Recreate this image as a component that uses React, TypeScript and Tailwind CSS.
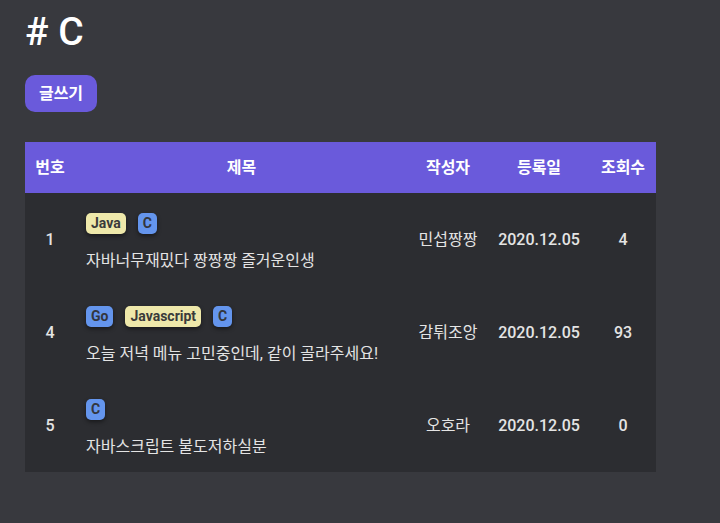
import type { ReactNode } from "react";

type Tag = "Java" | "C" | "Go" | "Javascript";

interface PostRow {
  id: number;
  tags: Tag[];
  title: string;
  author: string;
  date: string;
  views: number;
}

const rows: PostRow[] = [
  { id: 1, tags: ["Java", "C"], title: "자바너무재밌다 짱짱짱 즐거운인생", author: "민섭짱짱", date: "2020.12.05", views: 4 },
  { id: 4, tags: ["Go", "Javascript", "C"], title: "오늘 저녁 메뉴 고민중인데, 같이 골라주세요!", author: "감튀조앙", date: "2020.12.05", views: 93 },
  { id: 5, tags: ["C"], title: "자바스크립트 불도저하실분", author: "오호라", date: "2020.12.05", views: 0 },
];

function TagChip({ name }: { name: Tag }) {
  const yellow = name === "Java" || name === "Javascript";
  return (
    <span
      className={
        yellow
          ? "inline-flex h-[21px] items-center rounded-[5px] bg-[#eee8aa] px-[5px] text-[14px] font-bold text-[#3a3a3a] shadow-[0_2px_4px_rgba(0,0,0,0.45)]"
          : "inline-flex h-[21px] items-center rounded-[5px] bg-[#6495ed] px-[5px] text-[14px] font-bold text-[#33363d] shadow-[0_2px_4px_rgba(0,0,0,0.45)]"
      }
    >
      {name}
    </span>
  );
}

function Th({ children }: { children: ReactNode }) {
  return <th className="h-[51px] p-0 text-center text-[16px] font-bold text-white">{children}</th>;
}

export default function App() {
  return (
    <div
      className="min-h-[523px] bg-[#38393e] px-[25px] pt-[10px]"
      style={{ fontFamily: 'Roboto, "Noto Sans CJK KR", sans-serif' }}
    >
      <h1 className="text-[39px] font-medium leading-[44px] text-white"># C</h1>

      <button className="mt-[21px] h-[37px] w-[72px] rounded-[10px] bg-[#6a5adb] text-[16px] font-bold text-white">
        글쓰기
      </button>

      <table className="mt-[30px] w-[631px] table-fixed border-collapse">
        <colgroup>
          <col className="w-[50px]" />
          <col className="w-[333px]" />
          <col className="w-[80px]" />
          <col className="w-[102px]" />
          <col className="w-[66px]" />
        </colgroup>
        <thead>
          <tr className="bg-[#6a5adb]">
            <Th>번호</Th>
            <Th>제목</Th>
            <Th>작성자</Th>
            <Th>등록일</Th>
            <Th>조회수</Th>
          </tr>
        </thead>
        <tbody className="bg-[#2c2d31] text-[16px] text-[#e4e4e4]">
          {rows.map((r) => (
            <tr key={r.id}>
              <td className="p-0 text-center align-middle font-medium">{r.id}</td>
              <td className="px-[11px] pb-[13px] pt-[20px] align-top">
                <div className="flex gap-[12px]">
                  {r.tags.map((t) => (
                    <TagChip key={t} name={t} />
                  ))}
                </div>
                <div className="mt-[15px] whitespace-nowrap leading-[24px]">{r.title}</div>
              </td>
              <td className="p-0 text-center align-middle">{r.author}</td>
              <td className="p-0 text-center align-middle font-medium">{r.date}</td>
              <td className="p-0 text-center align-middle font-medium">{r.views}</td>
            </tr>
          ))}
        </tbody>
      </table>
    </div>
  );
}
